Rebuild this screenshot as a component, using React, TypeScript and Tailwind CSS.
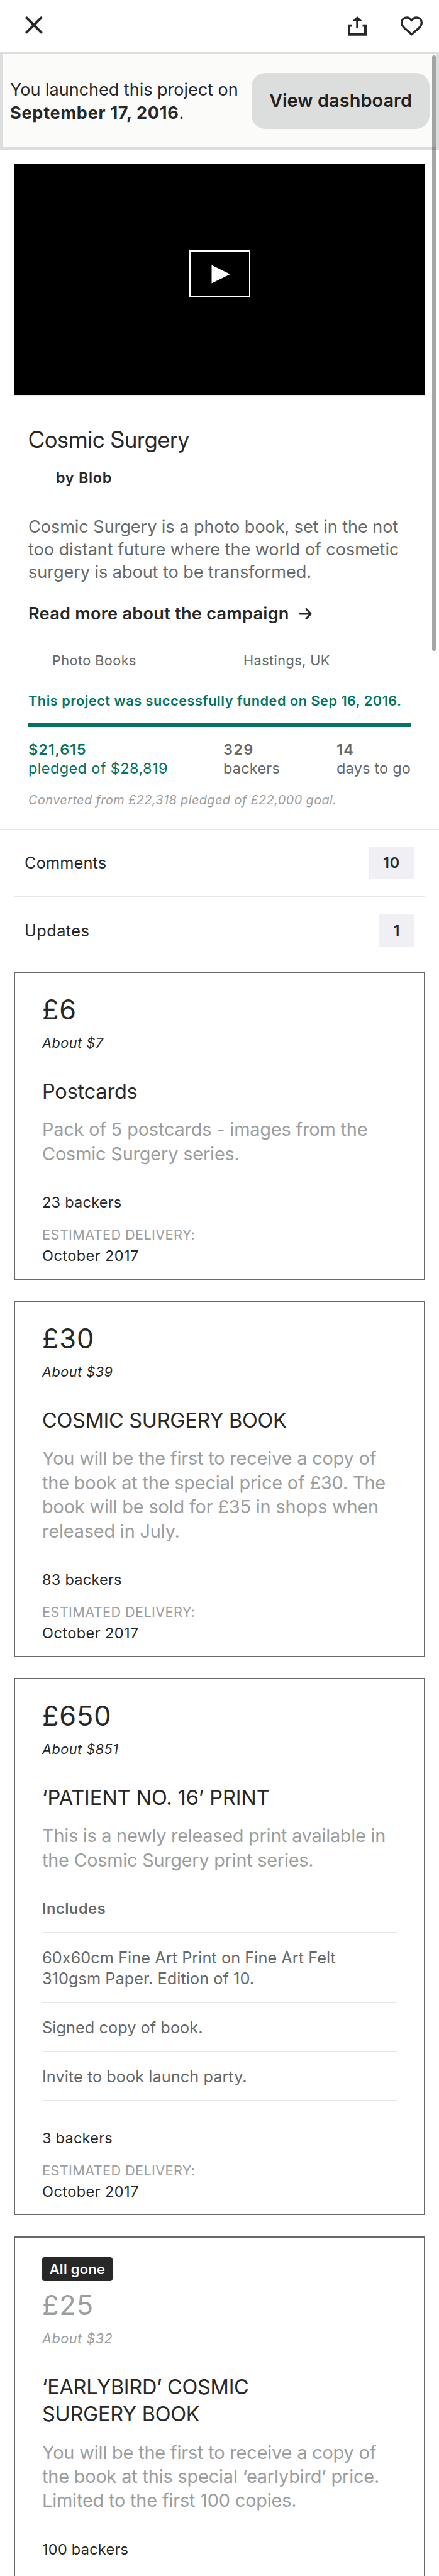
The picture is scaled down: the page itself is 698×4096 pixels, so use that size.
import type { ReactNode } from "react";

function CloseIcon() {
  return (
    <svg className="h-[28px] w-[28px]" viewBox="0 0 28 28" fill="none" stroke="#282828" strokeWidth="4" strokeLinecap="round">
      <path d="M2.4 2.4L25.4 25.4M25.4 2.4L2.4 25.4" />
    </svg>
  );
}

function ShareIcon() {
  return (
    <svg className="h-[31px] w-[30px]" viewBox="41 26 97 99" fill="#282828">
      <path d="M41 67H62V79H54V112H125V79H117V67H138V125H41Z" />
      <path d="M84 51H68Q65.5 50 67.5 47.5L87 28Q90 25.5 93 28L112.5 47.5Q114.5 50 112 51H96V87H84Z" />
    </svg>
  );
}

function HeartIcon() {
  return (
    <svg className="h-[31px] w-[35px]" viewBox="312 25 114 100" fill="none" stroke="#282828" strokeWidth="11" strokeLinejoin="round">
      <path d="M369 46C361 35 352 31 344 31C328 31 317.5 42 317.5 57C317.5 70 326 80 334 87L369 118.500L404 87C412 80 420.500 70 420.500 57C420.500 42 410 31 394 31C386 31 377 35 369 46Z" />
    </svg>
  );
}

function ArrowIcon() {
  return (
    <svg className="h-[20px] w-[22px]" viewBox="0 0 22 20" fill="none" stroke="#282828" strokeWidth="2.800" strokeLinecap="round" strokeLinejoin="round">
      <path d="M2 10H19M11.800 2.300L19.200 10L11.800 17.700" />
    </svg>
  );
}

function CountRow({ label, count, labelClass, rowClass, badgeClass }: { label: string; count: string; labelClass: string; rowClass: string; badgeClass: string }) {
  return (
    <div className={`flex shrink-0 items-center justify-between px-[39px] ${rowClass}`}>
      <span className={`text-[25.3px] text-[#282828] ${labelClass}`}>{label}</span>
      <span className={`flex h-[52px] items-center justify-center bg-[#efeff4] text-[23.5px] font-semibold text-[#282828] ${badgeClass}`}>
        {count}
      </span>
    </div>
  );
}

type Reward = {
  price: string;
  about: string;
  title: ReactNode;
  body: string[];
  bodyClass: string;
  titleClass: string;
  includes?: string[][];
  backers: string;
  delivery?: string;
  gone?: boolean;
};

function RewardCard({ reward }: { reward: Reward }) {
  const { price, about, title, body, includes, backers, delivery, gone } = reward;
  return (
    <article
      className={`mx-[22px] flex flex-col border-2 border-[#656969] px-[43px] ${
        gone ? "grow border-b-0 pt-[31.5px]" : "mb-[33.5px] shrink-0 pt-[32px] pb-[19.5px]"
      }`}
    >
      {gone && (
        <span className="mb-[12px] flex h-[38px] w-[112px] items-center justify-center rounded-[4px] bg-[#282828] text-[21.7px] font-semibold tracking-[0.4px] text-white">
          All gone
        </span>
      )}
      <p className={`text-[43.3px] leading-[52px] tracking-[0.9px] ${gone ? "text-[#9b9e9e]" : "text-[#282828]"}`}>{price}</p>
      <p className={`mt-[13px] text-[21.7px] leading-[28px] tracking-[0.5px] italic ${gone ? "text-[#9b9e9e]" : "text-[#282828]"}`}>{about}</p>
      <h2 className={`mt-[42px] text-[32.5px] leading-[43.3px] text-[#282828] ${reward.titleClass}`}>{title}</h2>
      <p className={`mt-[20px] text-[28.9px] leading-[38.4px] whitespace-nowrap text-[#9b9e9e] ${reward.bodyClass}`}>
        {body.map((line) => (
          <span key={line} className="block">{line}</span>
        ))}
      </p>
      {includes && (
        <div className="text-[#656969]">
          <h3 className="mt-[42px] mb-[21px] text-[23.5px] leading-[32px] font-semibold tracking-[0.58px]">Includes</h3>
          <ul className="border-b-2 border-[#e6e7e7]">
            {includes.map((lines) => (
              <li key={lines[0]} className="border-t-2 border-[#e6e7e7] pt-[22px] pb-[20.800px] text-[25.3px] leading-[33px] tracking-[0.04px] whitespace-nowrap">
                {lines.map((line) => (
                  <span key={line} className="block">{line}</span>
                ))}
              </li>
            ))}
          </ul>
        </div>
      )}
      <p className={`text-[23.5px] leading-[32px] tracking-[0.25px] text-[#282828] ${includes ? "mt-[43px]" : "mt-[42px]"}`}>{backers}</p>
      {delivery && (
        <>
          <p className="mt-[21px] text-[21.7px] leading-[28px] tracking-[0.37px] text-[#9b9e9e]">ESTIMATED DELIVERY:</p>
          <p className="mt-[4px] text-[23.5px] leading-[32px] tracking-[0.44px] text-[#282828]">{delivery}</p>
        </>
      )}
    </article>
  );
}

const rewards: Reward[] = [
  {
    price: "£6",
    about: "About $7",
    title: "Postcards",
    titleClass: "tracking-[-0.21px]",
    body: ["Pack of 5 postcards - images from the", "Cosmic Surgery series."],
    bodyClass: "tracking-[-0.18px]",
    backers: "23 backers",
    delivery: "October 2017",
  },
  {
    price: "£30",
    about: "About $39",
    title: "COSMIC SURGERY BOOK",
    titleClass: "tracking-[-0.3px]",
    body: [
      "You will be the first to receive a copy of",
      "the book at the special price of £30. The",
      "book will be sold for £35 in shops when",
      "released in July.",
    ],
    bodyClass: "tracking-[-0.18px]",
    backers: "83 backers",
    delivery: "October 2017",
  },
  {
    price: "£650",
    about: "About $851",
    title: "‘PATIENT NO. 16’ PRINT",
    titleClass: "tracking-[-0.09px]",
    body: ["This is a newly released print available in", "the Cosmic Surgery print series."],
    bodyClass: "tracking-[-0.27px]",
    includes: [["60x60cm Fine Art Print on Fine Art Felt", "310gsm Paper. Edition of 10."], ["Signed copy of book."], ["Invite to book launch party."]],
    backers: "3 backers",
    delivery: "October 2017",
  },
  {
    price: "£25",
    about: "About $32",
    title: (
      <>
        ‘EARLYBIRD’ COSMIC
        <br />
        SURGERY BOOK
      </>
    ),
    titleClass: "tracking-[-0.3px]",
    body: ["You will be the first to receive a copy of", "the book at this special ‘earlybird’ price.", "Limited to the first 100 copies."],
    bodyClass: "tracking-[-0.18px]",
    backers: "100 backers",
    gone: true,
  },
];

export default function App() {
  return (
    <div className="relative flex h-[4096px] w-[698px] flex-col overflow-hidden bg-white font-['Inter','Liberation_Sans',sans-serif] [font-feature-settings:'calt'_0]">
      <header className="flex h-[82px] shrink-0 items-start justify-between pt-[26px] pr-[26px] pl-[40px]">
        <CloseIcon />
        <div className="flex gap-[54px]">
          <ShareIcon />
          <HeartIcon />
        </div>
      </header>

      <section className="flex h-[156px] shrink-0 items-center justify-between border-4 border-[#dcdedd] bg-[#fbfbfa] pr-[11px] pl-[12px]">
        <p className="pt-px text-[27.1px] leading-[37px] tracking-[-0.05px] whitespace-nowrap text-[#282828]">
          You launched this project on
          <br />
          <span className="font-bold tracking-[0.73px]">September 17, 2016</span>.
        </p>
        <button className="h-[89px] w-[283px] rounded-[22px] bg-[#dcdedd] text-[28.9px] font-semibold tracking-[0.06px] whitespace-nowrap text-[#222]">
          View dashboard
        </button>
      </section>

      <div className="mx-[22px] mt-[23px] flex h-[369px] shrink-0 justify-center border-b-2 border-[#e6e7e7] bg-black pt-[137px]">
        <svg className="h-[75px] w-[97px]" viewBox="0 0 97 75">
          <rect x="1" y="1" width="95" height="73" fill="none" stroke="#fff" strokeWidth="2" />
          <path d="M35.500 23.500L65 38L35.500 52.500Z" fill="#fff" />
        </svg>
      </div>

      <main className="flex shrink-0 flex-col px-[45px] pt-[47px]">
        <h1 className="font-['Inter_Display','Inter',sans-serif] text-[36.1px] leading-[44px] tracking-[0.32px] text-[#282828]">Cosmic Surgery</h1>
        <p className="mt-[23px] ml-[44px] text-[23.5px] leading-[32px] font-semibold tracking-[0.64px] text-[#282828]">by Blob</p>
        <p className="mt-[44px] text-[27.1px] leading-[36px] tracking-[-0.06px] whitespace-nowrap text-[#656969]">
          Cosmic Surgery is a photo book, set in the not
          <br />
          too distant future where the world of cosmetic
          <br />
          surgery is about to be transformed.
        </p>
        <a className="mt-[30px] flex items-center text-[27.1px] leading-[36px] font-semibold tracking-[0.27px] text-[#282828]">
          <span className="w-[430px] whitespace-nowrap">Read more about the campaign</span>
          <ArrowIcon />
        </a>
        <div className="mt-[42px] grid grid-cols-[304px_1fr] pl-[38px] text-[21.7px] leading-[28px] tracking-[0.43px] text-[#656969]">
          <span>Photo Books</span>
          <span>Hastings, UK</span>
        </div>
        <p className="mt-[36px] text-[21.7px] leading-[28px] font-semibold tracking-[0.52px] whitespace-nowrap text-[#037362]">
          This project was successfully funded on Sep 16, 2016.
        </p>
        <div className="mt-[22px] h-[6px] bg-[#037362]" />
        <dl className="mt-[21px] grid grid-cols-[310px_180px_1fr] text-[23.5px] leading-[30px] whitespace-nowrap text-[#656969]">
          <div className="text-[#037362]">
            <dt className="font-semibold tracking-[0.86px]">$21,615</dt>
            <dd className="tracking-[0.38px]">pledged of $28,819</dd>
          </div>
          <div>
            <dt className="font-semibold tracking-[1.3px]">329</dt>
            <dd className="tracking-[0.21px]">backers</dd>
          </div>
          <div>
            <dt className="font-semibold tracking-[1.3px]">14</dt>
            <dd className="tracking-[0.2px]">days to go</dd>
          </div>
        </dl>
        <p className="mt-[23px] text-[19.9px] leading-[24px] tracking-[0.4px] whitespace-nowrap text-[#9b9e9e] italic">
          Converted from £22,318 pledged of £22,000 goal.
        </p>
      </main>

      <div className="mt-[34px] h-[2px] shrink-0 bg-[#e6e7e7]" />
      <CountRow label="Comments" count="10" labelClass="tracking-[0.16px]" rowClass="h-[104px]" badgeClass="w-[73px] tracking-[0.9px]" />
      <div className="mx-[22px] h-[2px] shrink-0 bg-[#e6e7e7]" />
      <CountRow label="Updates" count="1" labelClass="tracking-[0.45px]" rowClass="mb-[11px] h-[108px]" badgeClass="w-[57px]" />

      {rewards.map((reward) => (
        <RewardCard key={reward.price} reward={reward} />
      ))}

      <div className="absolute top-[88px] right-[5.500px] h-[947px] w-[6px] rounded-full bg-black/35" />
    </div>
  );
}
